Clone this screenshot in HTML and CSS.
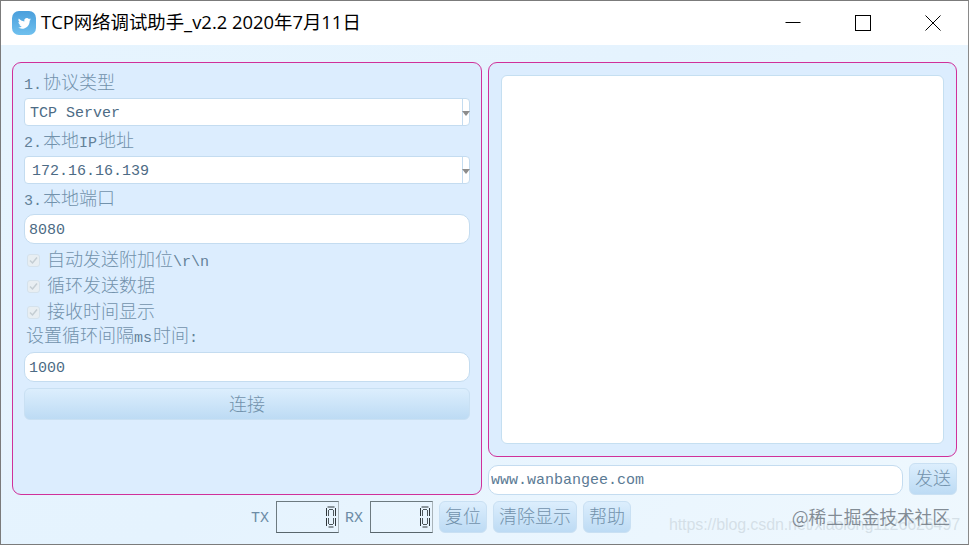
FILE: index.html
```html
<!DOCTYPE html>
<html lang="zh">
<head>
<meta charset="utf-8">
<title>TCP网络调试助手</title>
<link rel="stylesheet" href="styles.css">
</head>
<body>
<div class="window">
  <header class="titlebar">
    <svg class="app-icon" width="24" height="24" viewBox="0 0 24 24">
      <defs><linearGradient id="ic" x1="0" y1="0" x2="0" y2="1"><stop offset="0" stop-color="#4a9fdc"/><stop offset="1" stop-color="#6fc0ee"/></linearGradient></defs>
      <rect width="24" height="24" rx="7" fill="url(#ic)"/>
      <path d="M19 8.200c-.5.2-1 .4-1.600.4.6-.3 1-.8 1.200-1.400-.5.3-1.100.5-1.700.7a2.700 2.700 0 0 0-4.600 2.500c-2.200-.1-4.200-1.200-5.500-2.800-.7 1.200-.4 2.800.8 3.600-.4 0-.8-.1-1.200-.3 0 1.300.9 2.400 2.100 2.700-.4.100-.8.100-1.200 0 .3 1.100 1.300 1.800 2.500 1.900-1.100.9-2.500 1.300-3.900 1.100 4.700 2.800 11.700.3 11.800-6.900.5-.4 1-.9 1.300-1.500z" fill="#fff"/>
    </svg>
    <span class="title">TCP网络调试助手_v2.2 2020年7月11日</span>
    <div class="controls">
      <svg class="ctl" width="16" height="16" viewBox="0 0 16 16"><path d="M0.500 7.500h15" stroke="#000" fill="none"/></svg>
      <svg class="ctl" width="16" height="16" viewBox="0 0 16 16"><rect x="0.500" y="0.500" width="15" height="15" stroke="#000" fill="none"/></svg>
      <svg class="ctl" width="16" height="16" viewBox="0 0 16 16"><path d="M.5.500l15 15M15.500.500l-15 15" stroke="#000" fill="none"/></svg>
    </div>
  </header>
  <div class="body">
    <main class="main">
      <section class="panel left">
        <div class="label">1.<span class="cjk">协议类型</span></div>
        <div class="combo"><span class="combo-text">TCP Server</span><span class="arrow"></span></div>
        <div class="label">2.<span class="cjk">本地</span>IP<span class="cjk">地址</span></div>
        <div class="combo"><span class="combo-text ip">172.16.16.139</span><span class="arrow"></span></div>
        <div class="label">3.<span class="cjk">本地端口</span></div>
        <input class="field" value="8080" readonly>
        <label class="check first"><span class="box"><svg width="9" height="9" viewBox="0 0 9 9"><path d="M1 4.500l2.500 2.500L8 1.500" stroke="#c4cdd3" stroke-width="1.500" fill="none"/></svg></span><span class="cjk">自动发送附加位</span>\r\n</label>
        <label class="check"><span class="box"><svg width="9" height="9" viewBox="0 0 9 9"><path d="M1 4.500l2.500 2.500L8 1.500" stroke="#c4cdd3" stroke-width="1.500" fill="none"/></svg></span><span class="cjk">循环发送数据</span></label>
        <label class="check"><span class="box"><svg width="9" height="9" viewBox="0 0 9 9"><path d="M1 4.500l2.500 2.500L8 1.500" stroke="#c4cdd3" stroke-width="1.500" fill="none"/></svg></span><span class="cjk">接收时间显示</span></label>
        <div class="label interval"><span class="cjk">设置循环间隔</span>ms<span class="cjk">时间</span>:</div>
        <input class="field" value="1000" readonly>
        <button class="btn connect"><span class="cjk">连接</span></button>
      </section>
      <div class="right">
        <section class="panel display"><div class="screen"></div></section>
        <div class="send-row">
          <input class="field url" value="www.wanbangee.com" readonly>
          <button class="btn send"><span class="cjk">发送</span></button>
        </div>
      </div>
    </main>
    <footer class="status">
      <span class="tag">TX</span>
      <div class="lcd"><svg width="10" height="22" viewBox="0 0 10 22"><path d="M1.500 1h7M2.500 21h5M.5 2v8M9.500 2v8M.5 12v8M9.500 12v8" fill="none" stroke="#2f373b"/><path d="M3 3.500h4M2.500 4v6M7.500 4v6M2.500 12v6M7.500 12v6M3 18.500h4" fill="none" stroke="#4d575c"/></svg></div>
      <span class="tag">RX</span>
      <div class="lcd"><svg width="10" height="22" viewBox="0 0 10 22"><path d="M1.500 1h7M2.500 21h5M.5 2v8M9.500 2v8M.5 12v8M9.500 12v8" fill="none" stroke="#2f373b"/><path d="M3 3.500h4M2.500 4v6M7.500 4v6M2.500 12v6M7.500 12v6M3 18.500h4" fill="none" stroke="#4d575c"/></svg></div>
      <button class="btn small"><span class="cjk">复位</span></button>
      <button class="btn small"><span class="cjk">清除显示</span></button>
      <button class="btn small"><span class="cjk">帮助</span></button>
    </footer>
    <div class="wm-url">https://blog.csdn.net/xiaolong1126626497</div>
    <div class="wm-brand">@稀土掘金技术社区</div>
  </div>
</div>
</body>
</html>
```
FILE: styles.css
```css
html, body { margin: 0; padding: 0; }
body { width: 969px; height: 545px; overflow: hidden; background: #fff; }
* { box-sizing: border-box; }
.window {
  width: 969px; height: 545px; border: 1px solid #7b7b7b; border-right-color: #8a8a8a;
  display: flex; flex-direction: column; background: #fff;
}
.titlebar { height: 44px; display: flex; align-items: center; padding-left: 11px; background: #fff; flex: none; }
.app-icon { flex: none; margin-right: 5px; }
.title { font: 18.4px "Open Sans", "Noto Sans CJK SC", sans-serif; color: #000; white-space: nowrap; position: relative; top: -2px; }
.controls { margin-left: auto; display: flex; gap: 54px; padding-right: 27px; }
.ctl { display: block; }
.body {
  position: relative; flex: 1; padding: 17px 11px 0;
  background: linear-gradient(135deg, #e6f4fe 0%, #e5f3fe 45%, #eff8fe 100%);
  font: 15px "Liberation Mono", monospace; color: #638199;
}
.cjk { font: 300 18px/1 "Noto Sans CJK SC", sans-serif; color: #7292ac; }
.main { display: flex; gap: 6px; height: 433px; }
.panel { border: 1px solid #d0309a; border-radius: 9px; background: #dcedfe; }
.left { width: 470px; padding: 5px 11px 0; display: flex; flex-direction: column; }
.label { height: 30px; line-height: 26px; padding-top: 4px; white-space: pre; }
.label .cjk { margin-left: 1px; }
.interval { height: 27px; padding: 0 0 0 1px; line-height: 25px; }
.combo {
  height: 28px; flex: none; display: flex; align-items: center; justify-content: space-between;
  background: #fff; border: 1px solid #c4dcf0; border-radius: 4px; color: #4d6b85;
}
.combo-text { padding: 2px 0 0 5px; }
.combo-text.ip { padding-left: 7px; }
.arrow { width: 7px; height: 100%; border-left: 1px solid #c4dcf0; position: relative; }
.arrow::after {
  content: ""; position: absolute; left: -1px; top: 12px;
  border: 4px solid transparent; border-top: 5px solid #8c8c8c; border-bottom: 0;
}
.field {
  height: 30px; flex: none; width: 100%; background: #fff; border: 1px solid #c4dcf0; border-radius: 10px;
  padding: 2px 4px 0; outline: none; font: 15px "Liberation Mono", monospace; color: #4d6b85;
}
.check { height: 26px; line-height: 24px; padding: 2px 0 0 3px; white-space: pre; display: block; }
.check.first { margin-top: 3px; }
.box {
  display: inline-flex; vertical-align: 1px; width: 13px; height: 13px; margin-right: 7px;
  border: 1px solid #d5e2ec; border-radius: 3px; background: #e8eef2;
  align-items: center; justify-content: center;
}
.box svg { display: block; }
.btn {
  border: 1px solid #c9e0f3; border-radius: 6px; padding: 0;
  background: linear-gradient(180deg, #dceefd 0%, #bddbf4 100%);
  color: #6d8ca6; font: 15px "Liberation Mono", monospace;
}
.connect { height: 32px; flex: none; margin-top: 6px; width: 100%; padding-top: 2px; }
.right { width: 469px; display: flex; flex-direction: column; }
.display { height: 395px; flex: none; padding: 12px; }
.screen { height: 369px; background: #fff; border: 1px solid #c5dff1; border-radius: 6px; }
.send-row { display: flex; align-items: center; gap: 6px; margin-top: 6px; }
.url { flex: 1; width: auto; min-width: 0; margin-top: 1px; color: #5b7a94; padding-left: 2px; }
.send { width: 48px; height: 32px; flex: none; }
.status { display: flex; align-items: center; height: 32px; margin-top: 6px; padding-left: 239px; }
.tag { width: 25px; flex: none; white-space: pre; color: #6d8ca6; font-size: 15px; padding-top: 2px; }
.tag ~ .tag { margin-left: 6px; }
.lcd {
  width: 63px; height: 32px; flex: none; border: 1px solid #6d7a80; border-right-color: #a9b4ba;
  border-bottom-color: #59666c; display: flex; align-items: center; justify-content: flex-end; padding-right: 2px;
}
.lcd svg { display: block; }
.small { height: 32px; flex: none; padding: 0 5px; margin-left: 6px; }
.wm-url {
  position: absolute; right: 8px; top: 471px; font: 16px "Liberation Sans", sans-serif; color: rgba(205,216,224,.75);
  white-space: nowrap; letter-spacing: -.1px;
}
.wm-brand {
  position: absolute; right: 18px; top: 458px; font: 17.7px "Noto Sans CJK SC", sans-serif; color: rgba(95,105,115,.75);
  white-space: nowrap;
}
```
